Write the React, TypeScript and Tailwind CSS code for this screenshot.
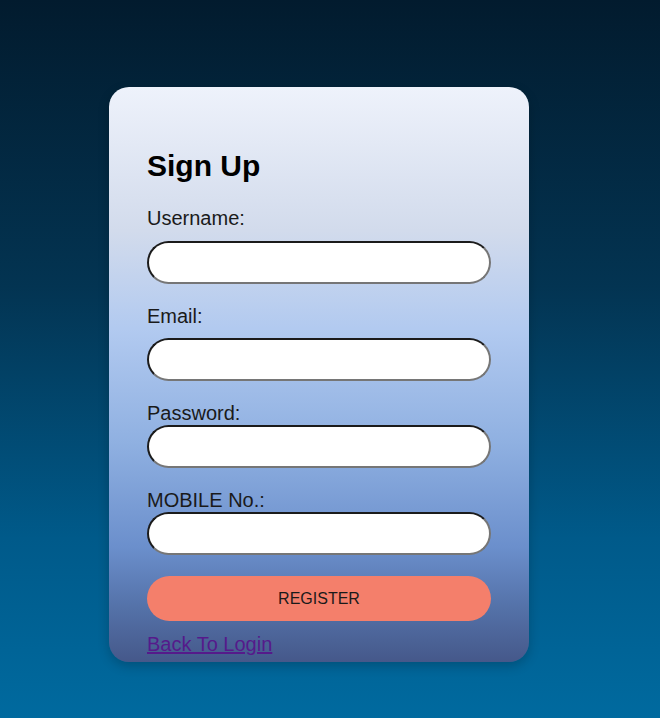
import React from "react";

const fields = [
  { label: "Username:", type: "text", gap: "mb-[12px]", top: "" },
  { label: "Email:", type: "email", gap: "mb-[11px]", top: "mt-[21px]" },
  { label: "Password:", type: "password", gap: "mb-[1px]", top: "mt-[21px]" },
  { label: "MOBILE No.:", type: "tel", gap: "mb-[1px]", top: "mt-[21px]" },
];

export default function App() {
  return (
    <div className="min-h-[718px] w-full bg-[linear-gradient(to_bottom,#021b2e_0%,#033452_40%,#005a8a_75%,#006a9f_100%)] font-['Liberation_Sans',Arial,sans-serif] pt-[87px]">
      <div className="ml-[109px] w-[420px] h-[575px] rounded-[20px] bg-[linear-gradient(to_bottom,#eef2fb_0%,#d2dbec_25%,#b2caf0_42%,#8fb0e1_62%,#6b8fcc_80%,#5573aa_90%,#45588a_100%)] shadow-[0_4px_12px_rgba(0,0,0,0.2)] px-[38px] pt-[62px]">
        <h2 className="text-[30px] font-bold leading-[34px] text-black">Sign Up</h2>
        <form className="mt-[24px] flex flex-col" onSubmit={(e) => e.preventDefault()}>
          {fields.map((f) => (
            <label key={f.label} className={`flex flex-col ${f.top}`}>
              <span className={`text-[20px] leading-[22px] text-[#1a1a1a] ${f.gap}`}>{f.label}</span>
              <input
                type={f.type}
                className="h-[43px] w-[344px] rounded-full bg-white border-2 border-t-[#1b1b1b] border-l-[#1b1b1b] border-b-[#767676] border-r-[#767676] px-4 text-[16px] outline-none"
              />
            </label>
          ))}
          <button
            type="submit"
            className="mt-[21px] h-[45px] w-[344px] rounded-full bg-[#f47f6b] text-[16px] text-[#1a1a1a]"
          >
            REGISTER
          </button>
          <a href="#" className="mt-[12px] text-[20px] leading-[22px] text-[#551a8b] underline self-start">
            Back To Login
          </a>
        </form>
      </div>
    </div>
  );
}
